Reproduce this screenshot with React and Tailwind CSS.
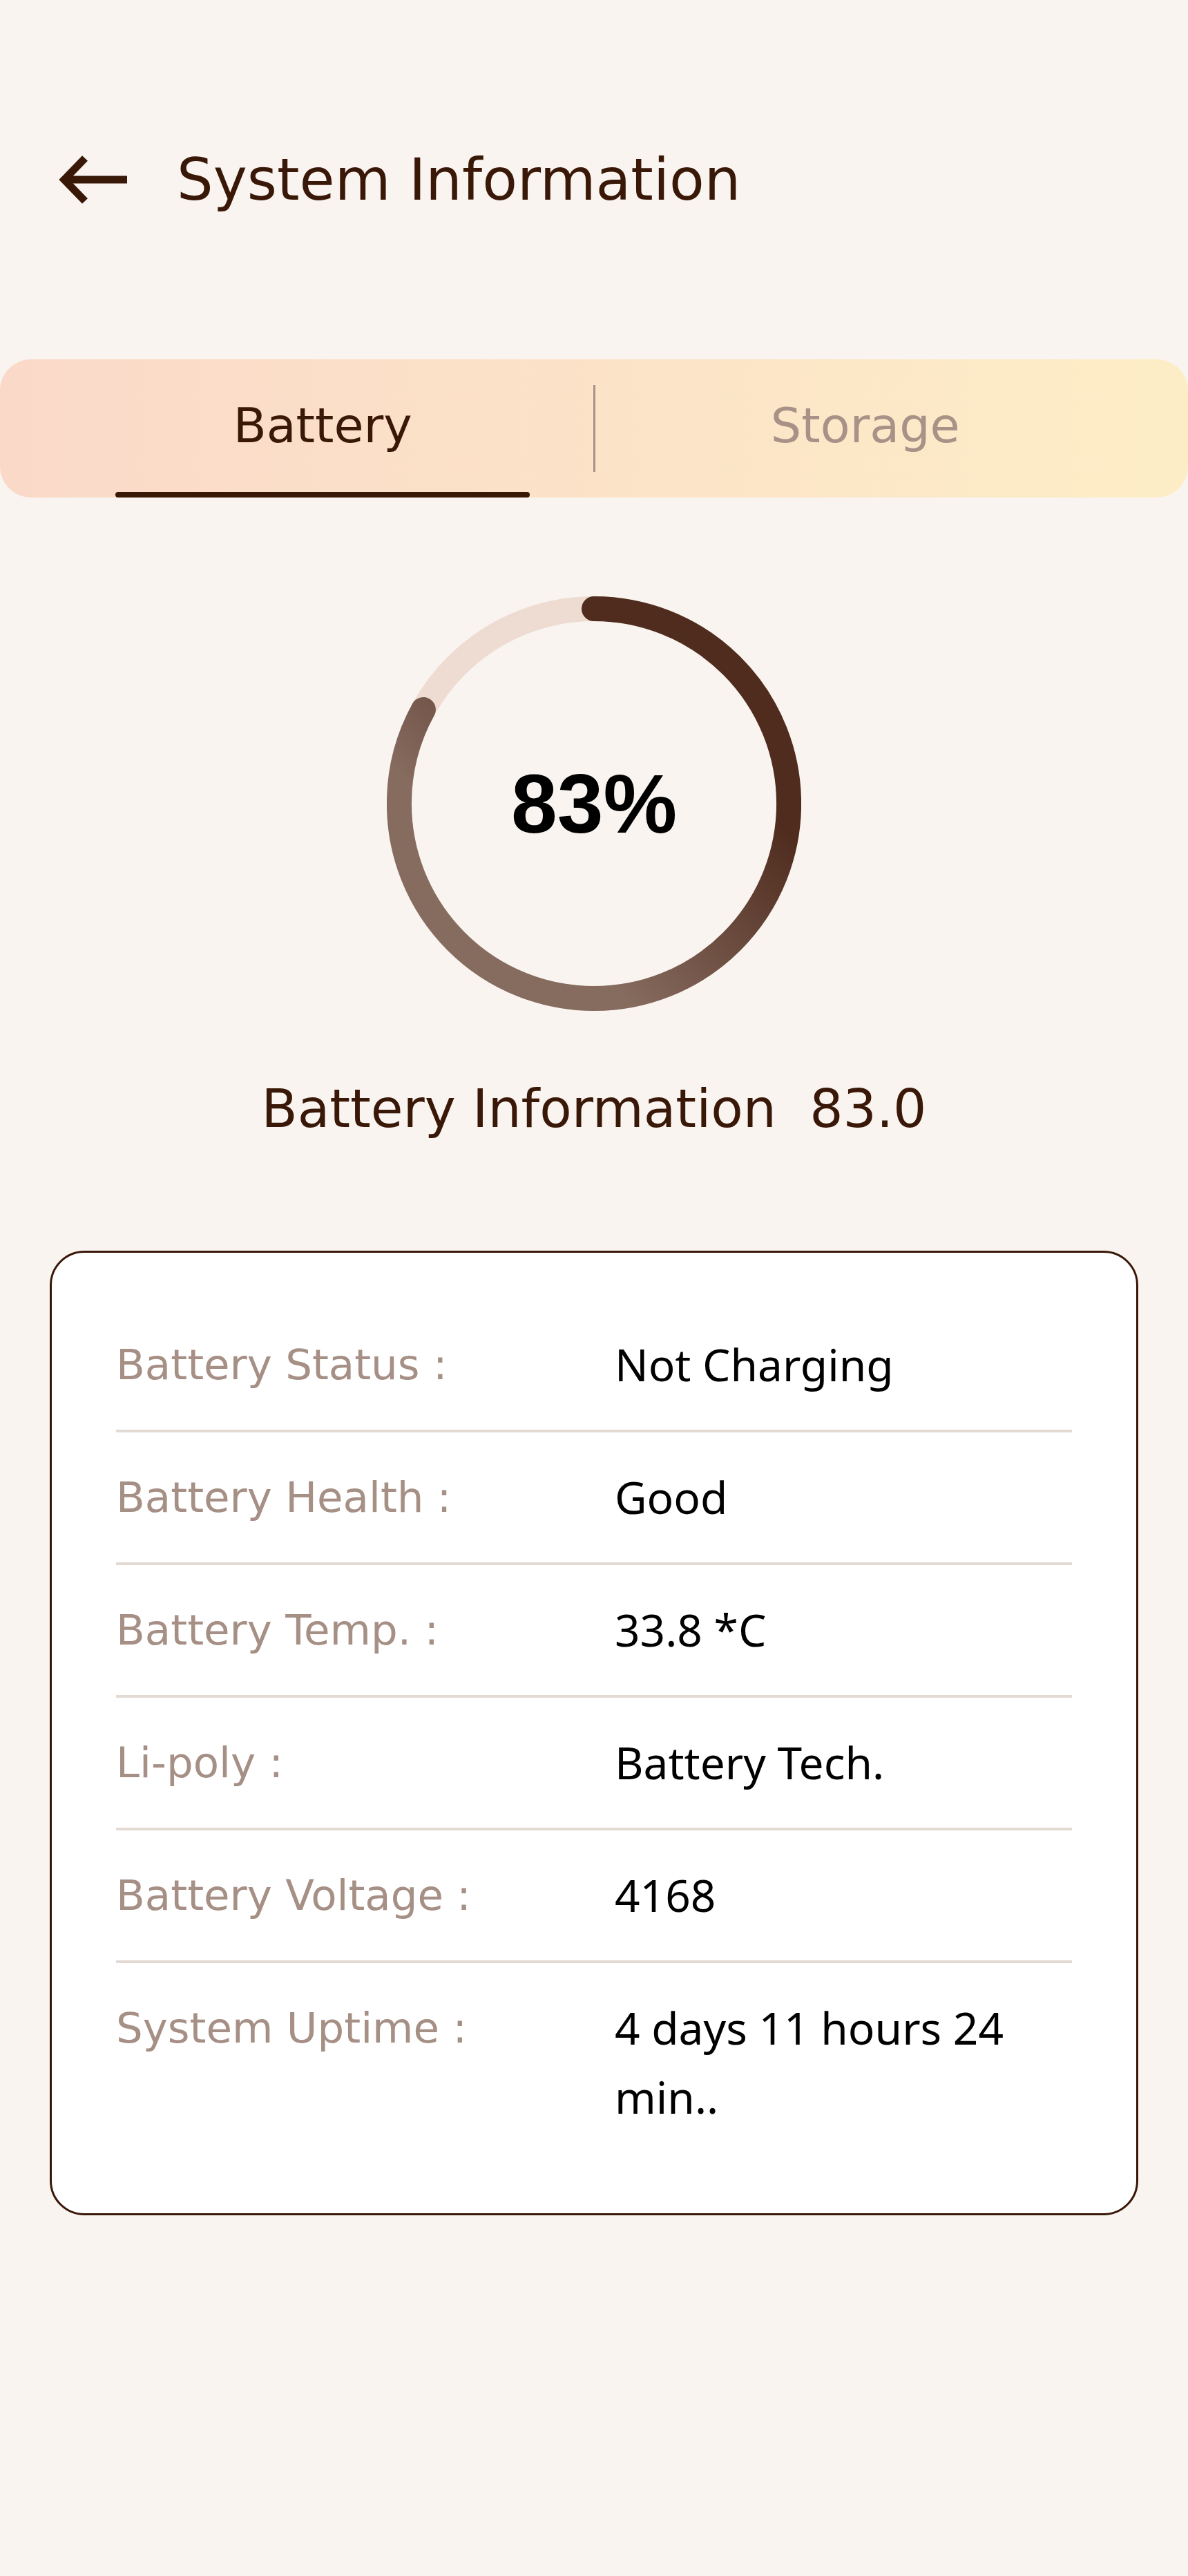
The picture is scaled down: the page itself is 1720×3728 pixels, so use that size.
import React from "react";

const rows = [
  ["Battery Status :", "Not Charging"],
  ["Battery Health :", "Good"],
  ["Battery Temp. :", "33.8 *C"],
  ["Li-poly :", "Battery Tech."],
  ["Battery Voltage :", "4168"],
  ["System Uptime :", "4 days 11 hours 24 min.."],
];

function Ring() {
  const r = 282;
  const c = 2 * Math.PI * r;
  const pct = 0.83;
  return (
    <div className="relative mx-auto h-[600px] w-[600px]">
      <svg width="600" height="600" viewBox="0 0 600 600">
        <defs>
          <linearGradient id="rg" gradientUnits="userSpaceOnUse" x1="560" y1="80" x2="80" y2="560">
            <stop offset="0.25" stopColor="#4F2C1E" />
            <stop offset="0.75" stopColor="#866B5F" />
          </linearGradient>
        </defs>
        <circle cx="300" cy="300" r={r} fill="none" stroke="#EEDCD2" strokeWidth="36" />
        <path
          d="M300,18 A282,282 0 1,1 300,582 A282,282 0 1,1 300,18"
          fill="none"
          stroke="url(#rg)"
          strokeWidth="36"
          strokeLinecap="round"
          strokeDasharray={`${c * pct} ${c}`}
        />
      </svg>
      <div className="absolute inset-0 flex items-center justify-center">
        <span className="text-[120px] font-bold leading-none text-black [font-family:'Liberation_Sans',Arial,sans-serif]">
          83%
        </span>
      </div>
    </div>
  );
}

export default function App() {
  return (
    <div className="min-h-[3728px] w-full bg-[#F9F4F0] pt-[218px] [font-family:'DejaVu_Sans',sans-serif]">
      {/* Header */}
      <div className="flex h-[84px] items-center pl-[86px]">
        <svg width="100" height="72" viewBox="0 0 100 72" className="shrink-0">
          <line x1="8" y1="36" x2="98" y2="36" stroke="#3A1808" strokeWidth="11" />
          <polyline points="37,5 7,36 37,67" fill="none" stroke="#3A1808" strokeWidth="11" />
        </svg>
        <h1 className="ml-[70px] text-[83px] font-normal leading-none text-[#3A1808]">
          System Information
        </h1>
      </div>

      {/* Tabs */}
      <div className="mt-[218px] flex h-[200px] rounded-[45px] bg-gradient-to-r from-[#FAD9C9] to-[#FDEDC6] px-[76px]">
        <div className="flex flex-1 flex-col">
          <div className="flex flex-1 items-center justify-center text-[70px] leading-none text-[#3A1808]">
            Battery
          </div>
          <div className="mx-auto h-[8px] w-[600px] rounded-full bg-[#3A1808]" />
        </div>
        <div className="h-[126px] w-[3px] self-center bg-[#A89287]" />
        <div className="flex flex-1 flex-col">
          <div className="flex flex-1 items-center justify-center text-[70px] leading-none text-[#A89287]">
            Storage
          </div>
          <div className="h-[8px]" />
        </div>
      </div>

      {/* Ring */}
      <div className="mt-[143px]">
        <Ring />
      </div>

      <div className="mt-[104px] text-center text-[76px] leading-none whitespace-pre text-[#3A1808]">
        {"Battery Information  83.0"}
      </div>

      {/* Card */}
      <div className="mx-[72px] mt-[167px] rounded-[50px] border-[3px] border-[#3A1808] bg-white px-[93px] pt-[68px] pb-[74px]">
        {rows.map(([k, v], i) => (
          <div key={k}>
            <div className="grid grid-cols-[722px_1fr] py-[44px] leading-[100px]">
              <div className="text-[61px] text-[#A68F85]">{k}</div>
              <div className="text-[64px] text-black [font-family:'Noto_Sans',sans-serif]">{v}</div>
            </div>
            {i < rows.length - 1 && <div className="h-[4px] bg-[#E4DAD4]" />}
          </div>
        ))}
      </div>
    </div>
  );
}
